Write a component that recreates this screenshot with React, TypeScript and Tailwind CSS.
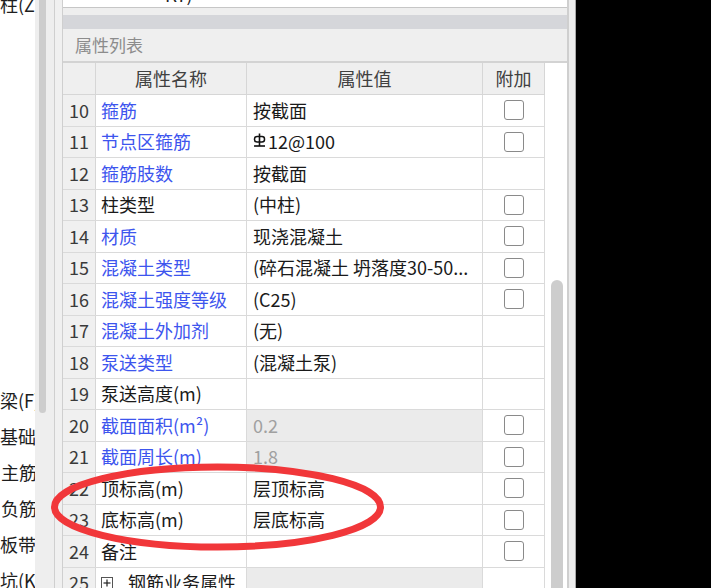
import React from "react";

type Row = {
  n: number;
  name: string;
  blue?: boolean;
  value?: React.ReactNode;
  grayVal?: boolean;
  check?: boolean;
  plus?: boolean;
};

function Steel() {
  return (
    <svg width="13" height="15" viewBox="0 0 13 15" className="inline-block mr-[2px] -mt-[3px] align-middle">
      <line x1="6.5" y1="0.5" x2="6.5" y2="13" stroke="#111" strokeWidth="1.6" />
      <rect x="1.5" y="3.5" width="10" height="5.5" rx="2.5" fill="none" stroke="#111" strokeWidth="1.5" />
      <line x1="1" y1="13" x2="12" y2="13" stroke="#111" strokeWidth="1.6" />
    </svg>
  );
}

const rows: Row[] = [
  { n: 10, name: "箍筋", blue: true, value: "按截面", check: true },
  { n: 11, name: "节点区箍筋", blue: true, value: (<><Steel />12@100</>), check: true },
  { n: 12, name: "箍筋肢数", blue: true, value: "按截面" },
  { n: 13, name: "柱类型", value: "(中柱)", check: true },
  { n: 14, name: "材质", blue: true, value: "现浇混凝土", check: true },
  { n: 15, name: "混凝土类型", blue: true, value: "(碎石混凝土 坍落度30-50...", check: true },
  { n: 16, name: "混凝土强度等级", blue: true, value: "(C25)", check: true },
  { n: 17, name: "混凝土外加剂", blue: true, value: "(无)" },
  { n: 18, name: "泵送类型", blue: true, value: "(混凝土泵)" },
  { n: 19, name: "泵送高度(m)", value: "" },
  { n: 20, name: "截面面积(m²)", blue: true, value: "0.2", grayVal: true, check: true },
  { n: 21, name: "截面周长(m)", blue: true, value: "1.8", grayVal: true, check: true },
  { n: 22, name: "顶标高(m)", value: "层顶标高", check: true },
  { n: 23, name: "底标高(m)", value: "层底标高", check: true },
  { n: 24, name: "备注", value: "", check: true },
  { n: 25, name: "钢筋业务属性", value: "", grayVal: true, plus: true },
];

function Check() {
  return <div className="w-[20px] h-[20px] rounded-[3px] border-[1.5px] border-[#8a8a8a] bg-white" />;
}

export default function App() {
  return (
    <div
      className="relative flex w-[711px] h-[588px] overflow-hidden bg-black"
      style={{ fontFamily: '"Noto Sans CJK SC", "Noto Sans", sans-serif' }}
    >
      {/* left tree strip */}
      <div className="w-[35px] shrink-0 bg-white flex flex-col overflow-hidden text-[18px] text-[#1e1e1e] whitespace-nowrap">
        <div className="h-[36px] leading-[36px] -mt-[14px] shrink-0">柱(Z)</div>
        <div className="h-[360px] shrink-0" />
        <div className="h-[36px] leading-[36px] shrink-0">梁(F)</div>
        <div className="h-[36px] leading-[36px] shrink-0">基础</div>
        <div className="h-[36px] leading-[36px] shrink-0 pl-[1px]">主筋</div>
        <div className="h-[36px] leading-[36px] shrink-0 pl-[1px]">负筋</div>
        <div className="h-[36px] leading-[36px] shrink-0">板带</div>
        <div className="h-[36px] leading-[36px] shrink-0">坑(K)</div>
      </div>
      {/* left scrollbar */}
      <div className="w-[20px] shrink-0 bg-[#eeeeee] border-r border-[#cfcfcf]">
        <div className="ml-[4px] w-[7px] h-[413px] rounded-b-full bg-[#cdcdcd]" />
      </div>
      <div className="w-[8px] shrink-0 bg-[#f0f0f0] border-r border-[#cfcfcf]" />

      {/* main panel */}
      <div className="w-[504px] shrink-0 flex flex-col bg-white">
        <div className="h-[8px] shrink-0 bg-white border-b border-[#c6c6c6] overflow-hidden">
          <div className="pl-[102px] -mt-[15px] text-[18px] leading-[18px] text-[#222]">K7)</div>
        </div>
        <div className="h-[7px] shrink-0 bg-[#eeeeee]" />
        <div className="h-[14px] shrink-0 bg-[#d5d6da]" />
        <div className="h-[34px] shrink-0 bg-[#efefef] border-b-2 border-[#d3d3d3] flex items-center pl-[12px] text-[17px] text-[#8c8c8c]">
          属性列表
        </div>
        <div className="flex flex-1 min-h-0">
          <div className="w-[482px] shrink-0 flex flex-col text-[18px]">
            <div className="h-[32px] shrink-0 flex border-b border-[#d6d6d6] bg-[#efefef] text-[#404040]">
              <div className="w-[33px] border-r border-[#d6d6d6]" />
              <div className="w-[151px] border-r border-[#d6d6d6] flex items-center justify-center">属性名称</div>
              <div className="w-[236px] border-r border-[#d6d6d6] flex items-center justify-center">属性值</div>
              <div className="w-[62px] border-r border-[#d6d6d6] flex items-center justify-center">附加</div>
            </div>
            {rows.map((r) => (
              <div key={r.n} className="h-[31.5px] shrink-0 flex border-b border-[#dadada]">
                <div className="w-[33px] shrink-0 bg-[#f0f0f0] border-r border-[#d6d6d6] flex items-center justify-center text-[#3a3a3a]">
                  {r.n}
                </div>
                <div
                  className={
                    "w-[151px] shrink-0 border-r border-[#dadada] flex items-center pl-[5px] whitespace-nowrap " +
                    (r.blue ? "text-[#3d55ee]" : "text-[#1a1a1a]")
                  }
                >
                  {r.plus && (
                    <span className="w-[12px] h-[12px] border border-[#555] flex items-center justify-center mr-[15px] shrink-0">
                      <svg width="8" height="8" viewBox="0 0 8 8">
                        <line x1="4" y1="0.5" x2="4" y2="7.5" stroke="#222" strokeWidth="1.2" />
                        <line x1="0.5" y1="4" x2="7.5" y2="4" stroke="#222" strokeWidth="1.2" />
                      </svg>
                    </span>
                  )}
                  {r.name}
                </div>
                <div
                  className={
                    "w-[236px] shrink-0 border-r border-[#dadada] flex items-center pl-[6px] pr-[4px] overflow-hidden whitespace-nowrap " +
                    (r.grayVal ? "bg-[#ebebeb] text-[#a0a0a0]" : "text-[#1a1a1a]")
                  }
                >
                  {r.value}
                </div>
                <div className="w-[62px] shrink-0 border-r border-[#dadada] flex items-center justify-center">
                  {r.check && <Check />}
                </div>
              </div>
            ))}
          </div>
          <div className="w-[22px] shrink-0 bg-white flex flex-col">
            <div className="h-[217px] shrink-0" />
            <div className="ml-[6px] w-[12px] flex-1 rounded-t-full bg-[#cdcdcd]" />
          </div>
        </div>
      </div>
      <div className="w-[2px] shrink-0 bg-[#cfcfcf]" />
      <div className="w-[7px] shrink-0 bg-[#ededed] border-r border-[#a8a8a8]" />
      <div className="flex-1 bg-black" />

      {/* red annotation ellipse */}
      <svg className="absolute left-0 top-0 pointer-events-none" width="711" height="588">
        <ellipse cx="217.5" cy="507" rx="163" ry="40" fill="none" stroke="#f1373a" strokeWidth="7" />
      </svg>
    </div>
  );
}
